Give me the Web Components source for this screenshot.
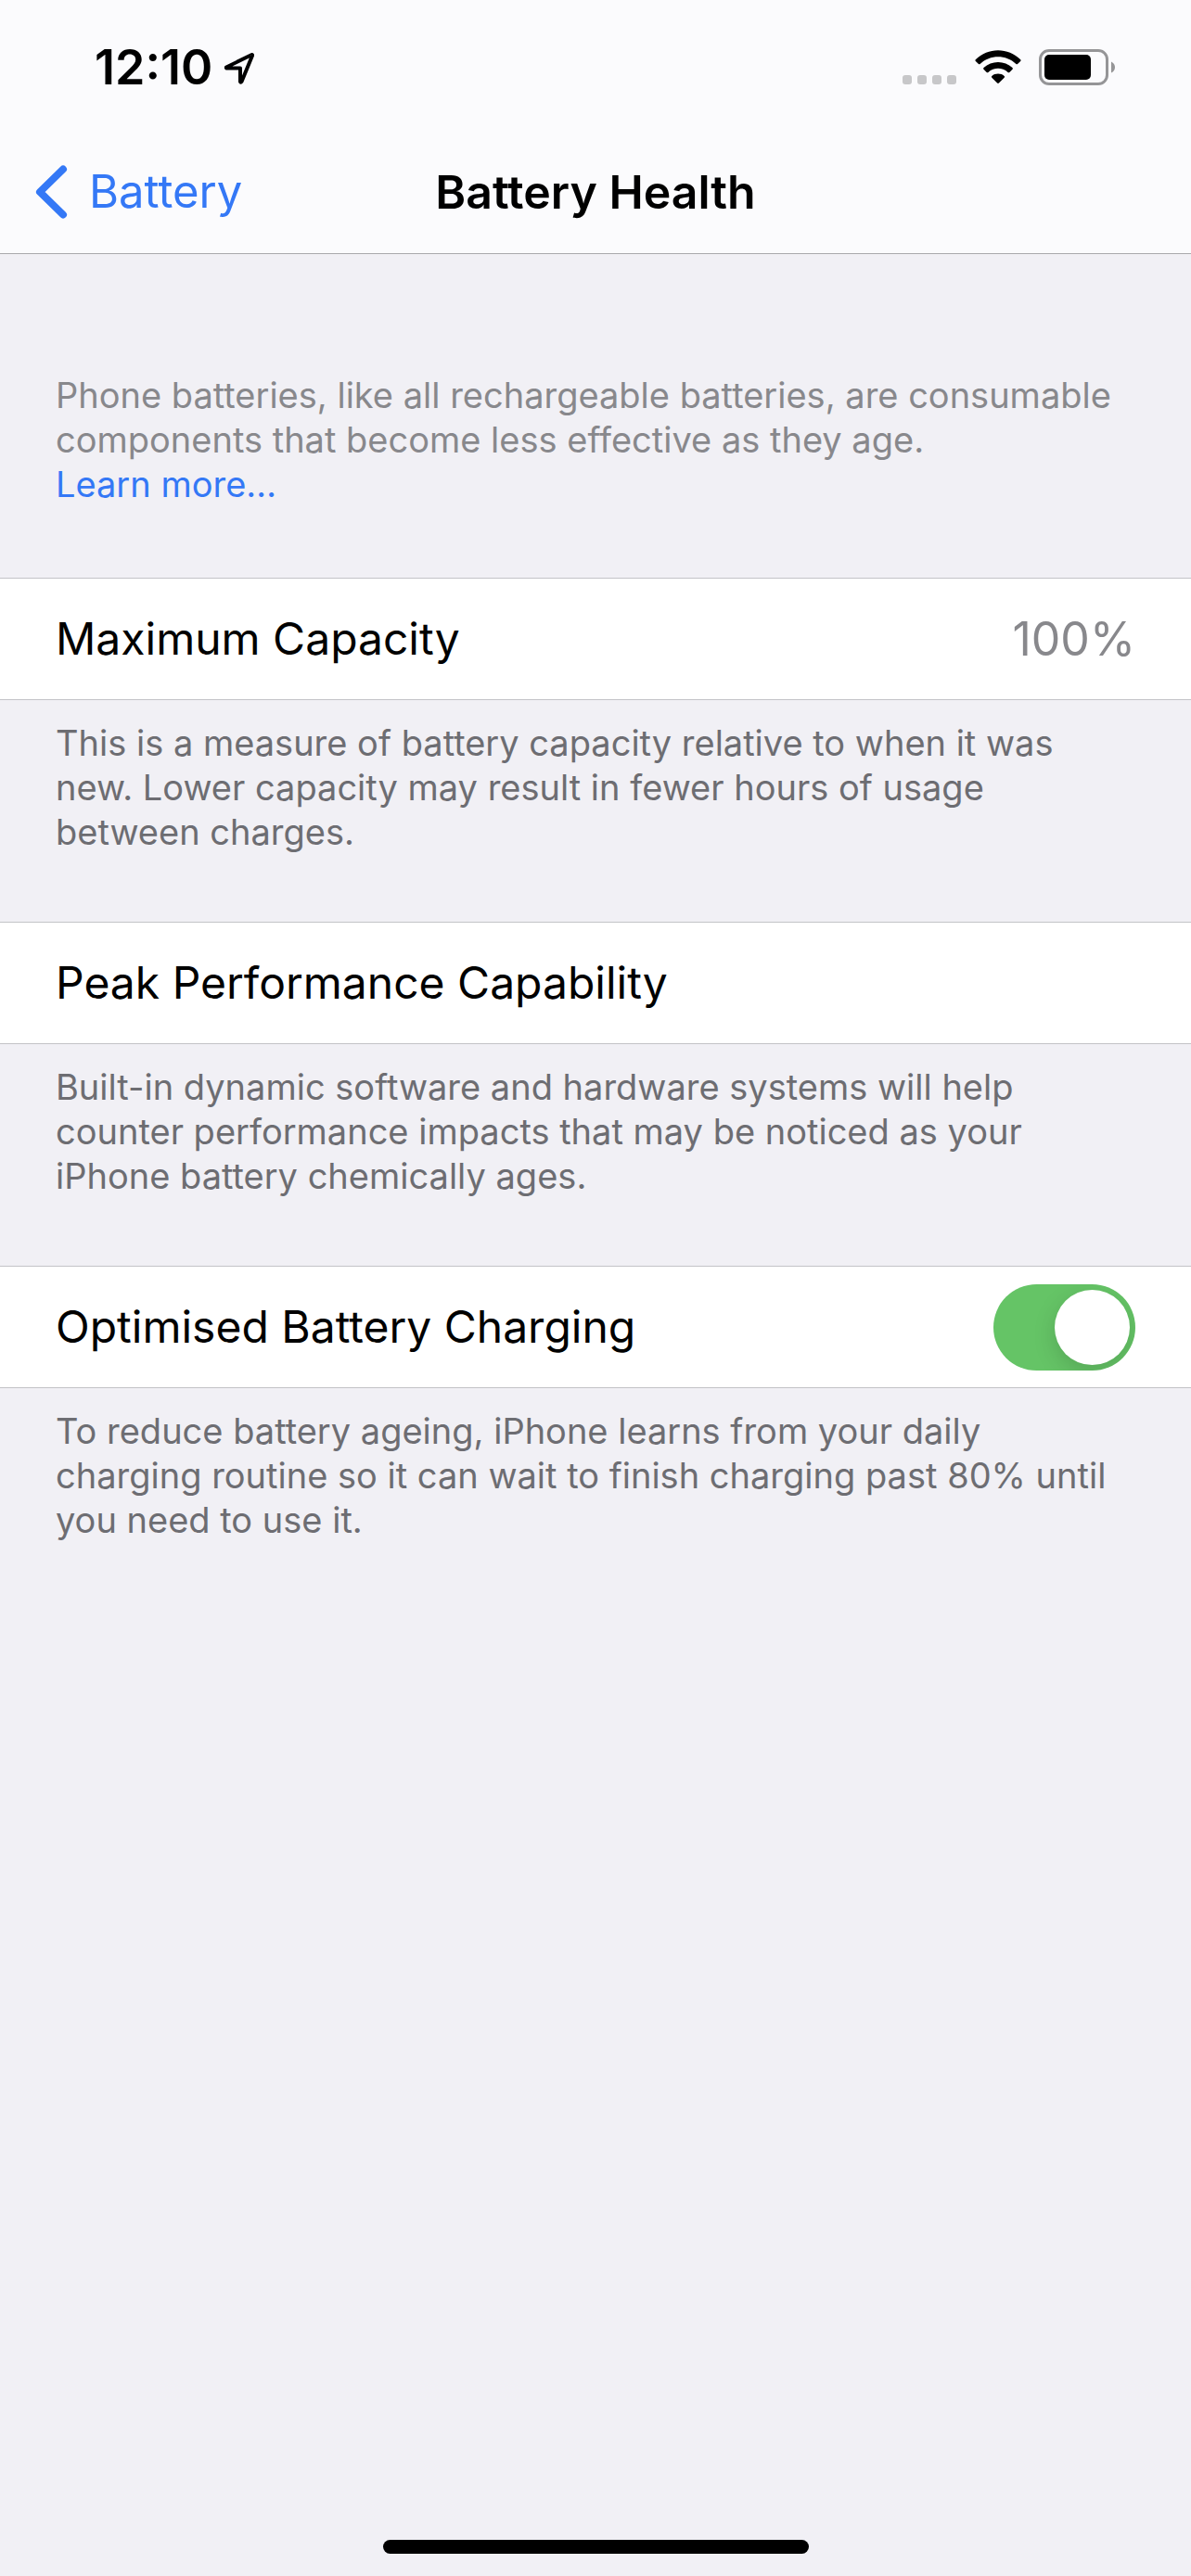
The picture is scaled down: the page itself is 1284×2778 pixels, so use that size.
<!DOCTYPE html>
<html lang="en-GB">
<head>
<meta charset="utf-8">
<meta name="viewport" content="width=device-width, initial-scale=1">
<title>Battery Health</title>
<style>
:root {
  --bg: #f1f0f5;
  --bar: #fbfbfd;
  --hairline: #c3c3c7;
  --blue: #3478f6;
  --green: #65c466;
  --grey: #88888c;
  --note: #6d6d72;
  --gutter: 60px;
}
body {
  margin: 0;
  background: var(--bg);
  font-family: Inter, "Liberation Sans", sans-serif;
}
</style>
</head>
<body>
<battery-health-page></battery-health-page>

<script>
const define = (name, css, html) => {
  customElements.define(name, class extends HTMLElement {
    connectedCallback() {
      if (this.shadowRoot) return;
      const shadow = this.attachShadow({ mode: "open" });
      shadow.innerHTML = `<style>${css}</style>${html}`;
    }
  });
}

define("status-bar", `
:host {
  display: flex;
  justify-content: space-between;
  align-items: center;
  box-sizing: border-box;
  height: 141px;
  padding: 4px 82px 0 102px;
}
div {
  display: flex;
  align-items: center;
}
time {
  font-size: 52px;
  font-weight: 600;
  line-height: 60px;
}
svg {
  display: block;
}
.left { gap: 12px; }
.right { gap: 19px; }
`, `
<div class="left">
  <time>12:10</time>
  <svg width="34" height="36" viewBox="0 0 34 36" fill="none" stroke="#000" stroke-width="4" stroke-linejoin="round" aria-label="Location">
    <path d="M30.500 4 L3 17.500 Q2.500 18.500 4 18.500 H18 V33 Q18.500 34.500 19.500 33 L31 5 Q31.200 4 30.500 4 Z"/>
  </svg>
</div>
<div class="right">
  <svg width="59" height="38" viewBox="0 0 59 38" fill="#c7c7c9" aria-label="No signal">
    <rect x="0" y="27" width="10" height="10" rx="3"/>
    <rect x="16" y="27" width="10" height="10" rx="3"/>
    <rect x="32" y="27" width="10" height="10" rx="3"/>
    <rect x="48" y="27" width="10" height="10" rx="3"/>
  </svg>
  <svg width="50" height="38" viewBox="0 0 50 38" aria-label="Wi-Fi">
    <path d="M0.800 10.200 C14 -3.200 36 -3.200 49.200 10.200 Q50 11 49.200 11.900 L46 15 Q45.200 15.700 44.400 15 C33.500 4.700 16.500 4.700 5.600 15 Q4.800 15.700 4 15 L0.800 11.900 Q0 11 0.800 10.200 Z"/>
    <path d="M9.500 19 C18 10.900 32 10.900 40.500 19 Q41.400 19.900 40.500 20.800 L37.300 23.900 Q36.500 24.700 35.600 23.900 C29.500 18.300 20.500 18.300 14.400 23.900 Q13.500 24.700 12.700 23.900 L9.500 20.800 Q8.600 19.900 9.500 19 Z"/>
    <path d="M18.300 28 C22 24.800 28 24.800 31.700 28 Q32.600 28.800 31.700 29.700 L25.900 35.600 Q25 36.500 24.100 35.600 L18.300 29.700 Q17.400 28.800 18.300 28 Z"/>
  </svg>
  <svg width="82" height="39" viewBox="0 0 82 39" aria-label="Battery level">
    <rect x="1.500" y="1.500" width="72" height="36" rx="9.500" fill="none" stroke="#959597" stroke-width="3"/>
    <rect x="6" y="6" width="50" height="27" rx="5"/>
    <path d="M78 13.500 Q82 15.500 82 19.500 T78 25.500 Z" fill="#959597"/>
  </svg>
</div>
`);

define("nav-bar", `
:host {
  display: grid;
  grid-template-columns: 1fr auto 1fr;
  align-items: center;
  height: 132px;
  padding: 0 38px;
  border-bottom: 1px solid #a9a9ac;
}
a {
  display: flex;
  align-items: center;
  gap: 23px;
  justify-self: start;
  color: var(--blue);
  font-size: 49px;
  line-height: 60px;
  text-decoration: none;
}
h1 {
  margin: 0;
  font-size: 50px;
  font-weight: 600;
  line-height: 60px;
}
svg {
  display: block;
}
`, `
<a href="#battery">
  <svg width="35" height="58" viewBox="0 0 35 58" fill="none" stroke="currentColor" stroke-width="8" stroke-linecap="round" stroke-linejoin="round" aria-hidden="true">
    <path d="M30 4.500 L5 29 L30 53.500"/>
  </svg>
  <slot name="back"></slot>
</a>
<h1><slot></slot></h1>
`);

define("settings-group", `
:host {
  display: block;
}
.row {
  display: flex;
  justify-content: space-between;
  align-items: center;
  box-sizing: border-box;
  min-height: 132px;
  padding: 0 var(--gutter);
  background: #fff;
  border: solid var(--hairline);
  border-width: 1px 0;
  font-size: 48px;
  line-height: 60px;
}
p {
  margin: 0;
  padding: 22px var(--gutter) 73px;
  color: var(--note);
  font-size: 38px;
  line-height: 48px;
}
`, `
<div class="row"><slot></slot></div>
<p><slot name="note"></slot></p>
`);

define("switch-field", `
:host {
  display: flex;
  flex: 1;
}
label {
  display: flex;
  flex: 1;
  justify-content: space-between;
  align-items: center;
}
input {
  appearance: none;
  box-sizing: border-box;
  display: flex;
  width: 153px;
  height: 93px;
  margin: 0;
  padding: 6px;
  border-radius: 47px;
  background: #e9e9eb;
  overflow: hidden;
}
input::before {
  content: "";
  width: 81px;
  height: 81px;
  border-radius: 50%;
  background: #fff;
  box-shadow: 0 8px 24px rgb(0 0 0 / .15);
}
input:checked {
  justify-content: flex-end;
  background: var(--green);
}
`, `
<label><slot></slot><input type="checkbox" role="switch" checked></label>
`);

define("home-indicator", `
:host {
  display: flex;
  justify-content: center;
  padding: 24px 0;
}
span {
  width: 459px;
  height: 15px;
  border-radius: 8px;
  background: #000;
}
`, `<span></span>`);

define("battery-health-page", `
:host {
  display: flex;
  flex-direction: column;
  min-height: 100vh;
}
header {
  background: var(--bar);
}
main {
  flex: 1;
}
.intro {
  margin: 0;
  padding: 128px var(--gutter) 77px;
  color: var(--grey);
  font-size: 38px;
  line-height: 48px;
}
.intro a {
  color: var(--blue);
  text-decoration: none;
}
.value {
  color: var(--grey);
  font-size: 50px;
}
`, `
<header>
  <status-bar></status-bar>
  <nav-bar><span slot="back">Battery</span>Battery Health</nav-bar>
</header>
<main>
  <p class="intro">Phone batteries, like all rechargeable batteries, are consumable components that become less effective as they age.<br><a href="#learn-more">Learn more…</a></p>
  <settings-group>
    <span>Maximum Capacity</span>
    <span class="value">100%</span>
    <span slot="note">This is a measure of battery capacity relative to when it was<br>new. Lower capacity may result in fewer hours of usage<br>between charges.</span>
  </settings-group>
  <settings-group>
    <span>Peak Performance Capability</span>
    <span slot="note">Built-in dynamic software and hardware systems will help<br>counter performance impacts that may be noticed as your<br>iPhone battery chemically ages.</span>
  </settings-group>
  <settings-group>
    <switch-field>Optimised Battery Charging</switch-field>
    <span slot="note">To reduce battery ageing, iPhone learns from your daily<br>charging routine so it can wait to finish charging past 80% until<br>you need to use it.</span>
  </settings-group>
</main>
<home-indicator></home-indicator>
`);
</script>
</body>
</html>
